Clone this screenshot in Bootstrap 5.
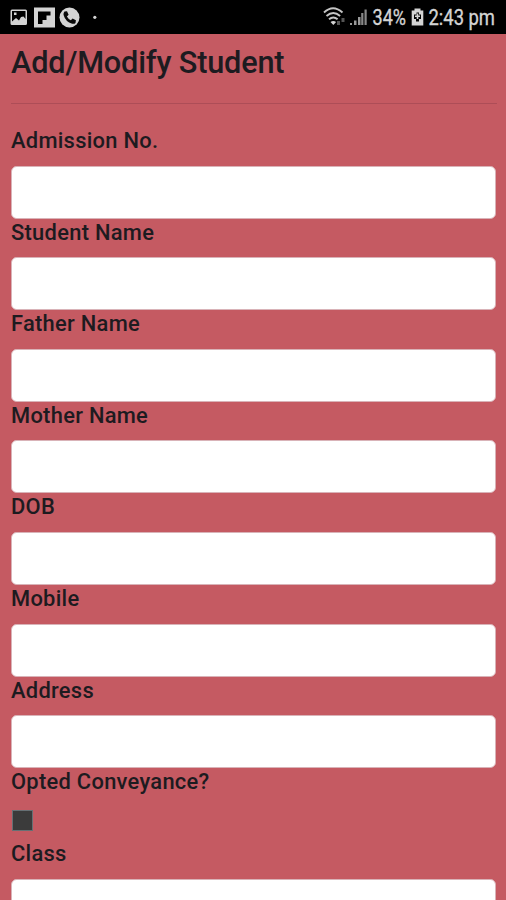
<!DOCTYPE html>
<html lang="en">
<head>
<meta charset="utf-8">
<meta name="viewport" content="width=device-width, initial-scale=1">
<title>Add/Modify Student</title>
<link href="https://cdn.jsdelivr.net/npm/bootstrap@5.3.0/dist/css/bootstrap.min.css" rel="stylesheet">
<style>
  body { font-family: Roboto, sans-serif; background: #c55a62; color: #1d1b20; height: 900px; overflow: hidden; }
  .status-bar { height: 34px; background: #000; }
  .page { padding: 11px 10px 0 11px; }
  .page-title { font-size: 30.7px; line-height: 36px; font-weight: 500; letter-spacing: -.18px; }
  .page-rule { margin: 21.5px -1px 23.6px 0; border-top: 1.5px solid #ad4d57; opacity: 1; }
  .field-label { font-size: 21.9px; line-height: 27px; font-weight: 500; margin-bottom: 11.6px; letter-spacing: .28px; }
  .page .form-control { height: 53px; border: 1px solid #d9b3b8; border-radius: 5.6px; background: #fff; }
  .page .form-check-input { width: 21px; height: 21px; margin: 3px 0 8.5px 1px; border: 1px solid #667074; border-radius: 0; background-color: #3b3b3b; float: none; }
  .check-row { height: 33.5px; }
</style>
<script src="https://cdn.jsdelivr.net/npm/bootstrap@5.3.0/dist/js/bootstrap.bundle.min.js"></script>
</head>
<body>
<header class="status-bar">
  <svg class="d-block" width="506" height="34" viewBox="0 0 506 34" fill="#d4d4d4" font-family="Roboto, sans-serif">
    <path fill-rule="evenodd" d="M12 9.500h13.500q1.500 0 1.500 1.500v12.500q0 1.500-1.500 1.500h-13.500q-1.500 0-1.500-1.500v-12.500q0-1.500 1.500-1.500zM12 11v10.500l4-3.500 3 2.500 2-3.500 2.500-.5 2 2.500v-8zM14 12.500h2.500v2.500h-2.500z"/>
    <path fill-rule="evenodd" d="M34 7.500h21v20h-21zM38 11.500v12.500h4.500v-4h4v-4.500h4v-4z"/>
    <circle cx="69.500" cy="17.500" r="10"/>
    <path fill="#0a0a0a" d="M64.500 11.500l2.500-.3 1.600 3.500-1.700 1.800q1.400 2.600 3.900 3.800l1.800-1.700 3.300 1.700-.4 2.700q-1.200 1.200-3.300.7-6.800-2-8.700-9-.2-2 1-3.200z"/>
    <circle cx="94.800" cy="17.300" r="1.600"/>
    <g fill="none" stroke="#c5c5c5" stroke-width="1.900">
      <path d="M324 12.500q9-8.500 18.500 0M326.500 16q6.800-6 13.600 0M329 19.300q4.300-3.800 8.600 0"/>
    </g>
    <path d="M330.500 22q2.800-1.800 5.600 0l-2.800 3z"/>
    <path fill="#555" d="M337 21h3v4h-3zM341.500 18h3v4h-3z"/>
    <path fill="#999" d="M350 23h2v2h-2zM354 20.500h2.500v4.500h-2.500zM358 17h2.500v8h-2.500z"/>
    <path fill="#888" d="M361.200 13h2.200v12h-2.200zM364.500 9.500h2.200v15.500h-2.200z"/>
    <g stroke="#d4d4d4" stroke-width=".35">
      <text x="372.500" y="25.300" font-size="21.500" textLength="33.500" lengthAdjust="spacingAndGlyphs">34%</text>
      <text x="428.500" y="25.300" font-size="21.500" textLength="66.500" lengthAdjust="spacingAndGlyphs">2:43 pm</text>
    </g>
    <path fill-rule="evenodd" d="M414.500 8.500h6v2h2.800v15h-11.600v-15h2.800zM416.500 12.500v2h-2.500v4.500h2v2.500h3v-2.500h2v-4.500h-2v-2z"/>
    <path d="M416.700 13.500h1.600v2h1.700v1.600h-1.700v2h-1.600v-2h-1.700v-1.600h1.700z"/>
  </svg>
</header>
<main class="page">
  <h1 class="page-title mb-0">Add/Modify Student</h1>
  <hr class="page-rule">
  <form>
    <label class="field-label d-block" for="admission">Admission No.</label>
    <input class="form-control" id="admission" type="text">
    <label class="field-label d-block" for="student">Student Name</label>
    <input class="form-control" id="student" type="text">
    <label class="field-label d-block" for="father">Father Name</label>
    <input class="form-control" id="father" type="text">
    <label class="field-label d-block" for="mother">Mother Name</label>
    <input class="form-control" id="mother" type="text">
    <label class="field-label d-block" for="dob">DOB</label>
    <input class="form-control" id="dob" type="text">
    <label class="field-label d-block" for="mobile">Mobile</label>
    <input class="form-control" id="mobile" type="text">
    <label class="field-label d-block" for="address">Address</label>
    <input class="form-control" id="address" type="text">
    <label class="field-label d-block" for="conveyance">Opted Conveyance?</label>
    <div class="check-row d-flex"><input class="form-check-input" id="conveyance" type="checkbox"></div>
    <label class="field-label d-block" for="class">Class</label>
    <input class="form-control" id="class" type="text">
  </form>
</main>
</body>
</html>
